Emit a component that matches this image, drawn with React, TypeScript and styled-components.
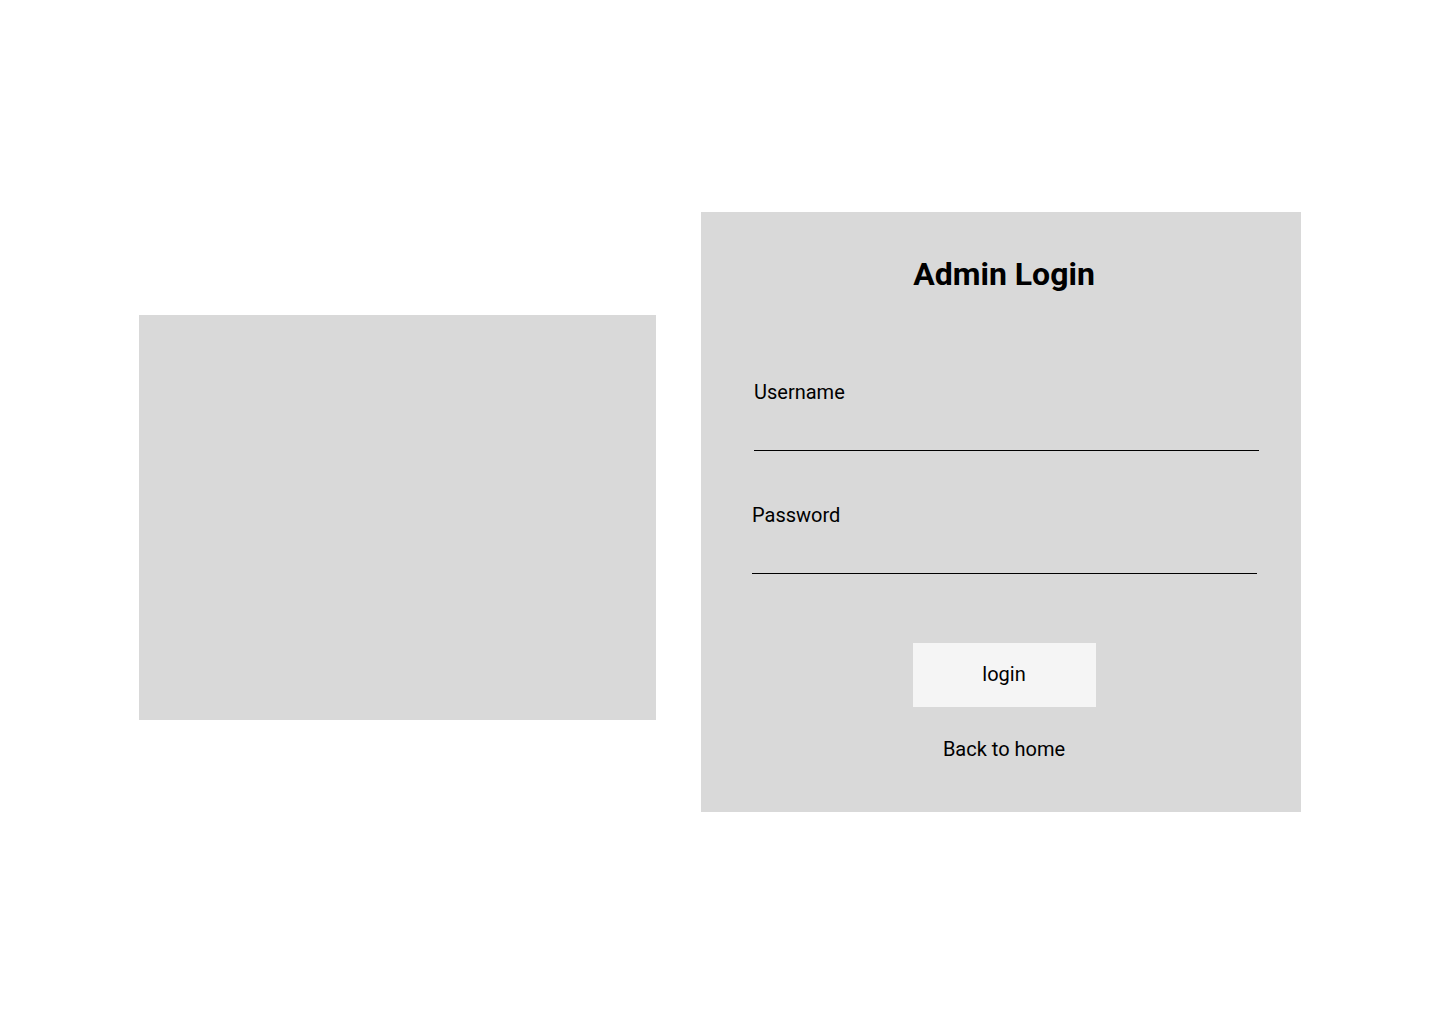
import React from "react";
import styled, { createGlobalStyle } from "styled-components";

const Global = createGlobalStyle`
  html, body { margin: 0; padding: 0; background: #ffffff; }
  body { font-family: Roboto, "Liberation Sans", sans-serif; color: #000; }
  * { box-sizing: border-box; }
`;

const Page = styled.div`
  width: 1440px;
  height: 1024px;
  display: flex;
  flex-direction: row;
  justify-content: center;
  align-items: flex-start;
  gap: 45px;
  padding-top: 212px;
`;

const ImageBox = styled.div`
  width: 517px;
  height: 405px;
  margin-top: 103px;
  background: #d9d9d9;
`;

const Panel = styled.div`
  width: 600px;
  height: 600px;
  background: #d9d9d9;
  display: flex;
  flex-direction: column;
  align-items: center;
  padding: 44px 0 0 6px;
`;

const Title = styled.h1`
  margin: 0;
  font-size: 32px;
  font-weight: 700;
  line-height: 37px;
`;

const Field = styled.label<{ $shift: number; $gap: number }>`
  display: flex;
  flex-direction: column;
  width: 505px;
  margin-top: ${(p) => p.$gap}px;
  margin-left: ${(p) => p.$shift}px;
`;

const Label = styled.span`
  font-size: 20px;
  line-height: 23.5px;
`;

const Input = styled.input`
  height: 47px;
  border: none;
  border-bottom: 1px solid #000;
  background: transparent;
  outline: none;
  font-family: inherit;
  font-size: 18px;
  padding: 0;
`;

const Button = styled.button`
  width: 183px;
  height: 64px;
  margin-top: 69px;
  border: none;
  background: #f5f5f5;
  font-family: inherit;
  font-size: 20px;
  line-height: 23.5px;
  padding: 0 0 1px;
  color: #000;
  cursor: pointer;
`;

const BackLink = styled.a`
  margin-top: 31px;
  font-size: 20px;
  line-height: 23.5px;
  color: #000;
  text-decoration: none;
`;

export default function App() {
  return (
    <>
      <Global />
      <Page>
        <ImageBox />
        <Panel>
          <Title>Admin Login</Title>
          <Field $shift={5} $gap={87.5}>
            <Label>Username</Label>
            <Input type="text" />
          </Field>
          <Field $shift={1} $gap={52.5}>
            <Label>Password</Label>
            <Input type="password" />
          </Field>
          <Button>login</Button>
          <BackLink href="#">Back to home</BackLink>
        </Panel>
      </Page>
    </>
  );
}
